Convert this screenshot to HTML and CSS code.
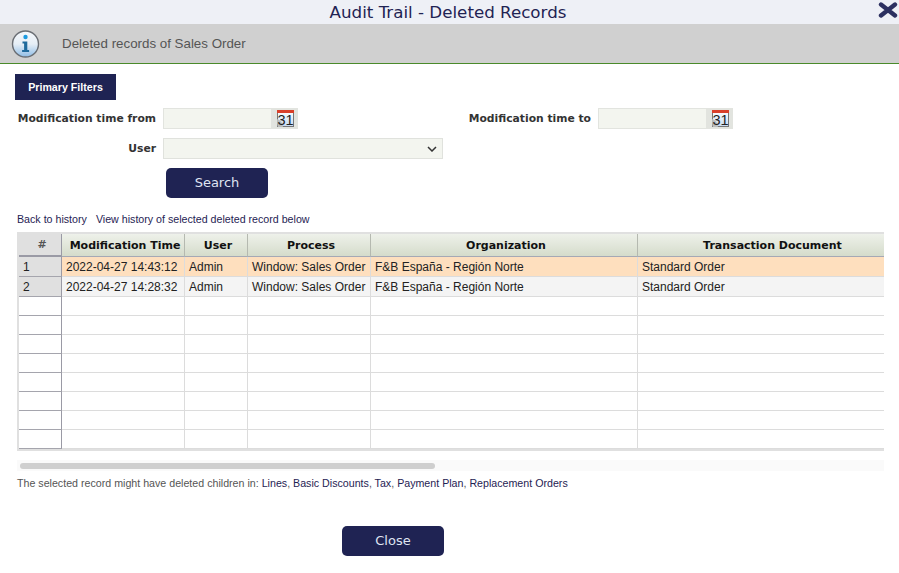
FILE: index.html
```html
<!DOCTYPE html>
<html lang="en">
<head>
    <meta charset="UTF-8">
    <title>Audit Trail - Deleted Records</title>
    <link rel="stylesheet" href="styles.css">
</head>
<body>
    <div class="title-bar">
        <span class="title-text">Audit Trail - Deleted Records</span>
        <svg class="close-icon" width="20" height="16" viewBox="0 0 20 16">
            <path d="M3 2.5 L17 13.5 M17 2.5 L3 13.5" stroke="#2c3060" stroke-width="4.4" stroke-linecap="round" fill="none"/>
        </svg>
    </div>

    <div class="message-bar">
        <svg class="info-icon" width="30" height="30" viewBox="0 0 30 30">
            <defs>
                <linearGradient id="infoFill" x1="0" y1="0" x2="0" y2="1">
                    <stop offset="0" stop-color="#f6f9fc"/>
                    <stop offset="0.5" stop-color="#e6eef6"/>
                    <stop offset="1" stop-color="#8fbde6"/>
                </linearGradient>
            </defs>
            <circle cx="14.5" cy="15" r="13" fill="url(#infoFill)" stroke="#6a6e74" stroke-width="1.4"/>
            <circle cx="14.5" cy="8" r="2.2" fill="#1d9be0"/>
            <path d="M11.5 12.5 H16.3 V21 H18.1 V23 H11.1 V21 H13.1 V14.5 H11.5 Z" fill="#1f6a9c"/>
        </svg>
        <span>Deleted records of Sales Order</span>
    </div>

    <div class="content">
        <div class="tab-row"><span class="tab">Primary Filters</span></div>

        <div class="filter-row">
            <label class="filter-label">Modification time from</label>
            <input class="filter-input" type="text">
            <span class="cal-btn">
                <svg width="17" height="17" viewBox="0 0 17 17">
                    <defs>
                        <linearGradient id="calFill" x1="0" y1="0" x2="0" y2="1">
                            <stop offset="0" stop-color="#ffffff"/>
                            <stop offset="1" stop-color="#c5daf2"/>
                        </linearGradient>
                    </defs>
                    <rect x="0.5" y="1" width="16" height="15.5" fill="url(#calFill)" stroke="#777"/>
                    <rect x="0" y="0" width="17" height="3" fill="#d9402a"/>
                    <path d="M0 9 Q5 10 6 17 H1 Q0 15 0 9 Z" fill="#b9bcbc"/>
                    <text x="8.5" y="15" class="cal-num">31</text>
                </svg>
            </span>
            <label class="filter-label filter-label-to">Modification time to</label>
            <input class="filter-input" type="text">
            <span class="cal-btn">
                <svg width="17" height="17" viewBox="0 0 17 17">
                    <rect x="0.5" y="1" width="16" height="15.5" fill="url(#calFill)" stroke="#777"/>
                    <rect x="0" y="0" width="17" height="3" fill="#d9402a"/>
                    <path d="M0 9 Q5 10 6 17 H1 Q0 15 0 9 Z" fill="#b9bcbc"/>
                    <text x="8.5" y="15" class="cal-num">31</text>
                </svg>
            </span>
        </div>

        <div class="filter-row user-row">
            <label class="filter-label">User</label>
            <div class="user-select">
                <svg width="10" height="6" viewBox="0 0 10 6">
                    <path d="M1 1 L5 5 L9 1" stroke="#333" stroke-width="1.5" fill="none"/>
                </svg>
            </div>
        </div>

        <button class="btn search-btn" type="button">Search</button>

        <div class="links">
            <a href="#">Back to history</a>
            <a href="#">View history of selected deleted record below</a>
        </div>

        <div class="grid-wrap">
            <table class="grid">
                <colgroup>
                    <col class="col-num">
                    <col class="col-time">
                    <col class="col-user">
                    <col class="col-process">
                    <col class="col-org">
                    <col class="col-doc">
                </colgroup>
                <thead>
                    <tr>
                        <th class="num">#</th>
                        <th>Modification Time</th>
                        <th>User</th>
                        <th>Process</th>
                        <th>Organization</th>
                        <th>Transaction Document</th>
                    </tr>
                </thead>
                <tbody>
                    <tr class="selected">
                        <td class="num">1</td>
                        <td>2022-04-27 14:43:12</td>
                        <td>Admin</td>
                        <td>Window: Sales Order</td>
                        <td>F&amp;B España - Región Norte</td>
                        <td>Standard Order</td>
                    </tr>
                    <tr class="filled">
                        <td class="num">2</td>
                        <td>2022-04-27 14:28:32</td>
                        <td>Admin</td>
                        <td>Window: Sales Order</td>
                        <td>F&amp;B España - Región Norte</td>
                        <td>Standard Order</td>
                    </tr>
                    <tr><td class="num"></td><td></td><td></td><td></td><td></td><td></td></tr>
                    <tr><td class="num"></td><td></td><td></td><td></td><td></td><td></td></tr>
                    <tr><td class="num"></td><td></td><td></td><td></td><td></td><td></td></tr>
                    <tr><td class="num"></td><td></td><td></td><td></td><td></td><td></td></tr>
                    <tr><td class="num"></td><td></td><td></td><td></td><td></td><td></td></tr>
                    <tr><td class="num"></td><td></td><td></td><td></td><td></td><td></td></tr>
                    <tr><td class="num"></td><td></td><td></td><td></td><td></td><td></td></tr>
                    <tr><td class="num"></td><td></td><td></td><td></td><td></td><td></td></tr>
                </tbody>
            </table>
        </div>

        <div class="scroll-track"><div class="scroll-thumb"></div></div>

        <p class="children-note">The selected record might have deleted children in:
            <a href="#">Lines</a>, <a href="#">Basic Discounts</a>, <a href="#">Tax</a>, <a href="#">Payment Plan</a>, <a href="#">Replacement Orders</a></p>

        <div class="footer">
            <button class="btn" type="button">Close</button>
        </div>
    </div>
</body>
</html>
```

FILE: styles.css
```css
body {
    margin: 0;
    height: 573px;
    overflow: hidden;
    background-color: #fff;
    font-family: "Liberation Sans", Arial, sans-serif;
    color: #333;
}

a {
    color: #1f2353;
    text-decoration: none;
}

/* title */
.title-bar {
    display: flex;
    justify-content: center;
    align-items: center;
    position: relative;
    height: 24px;
    padding-right: 3px;
    background-color: #eef0f6;
}

.title-text {
    font-family: "DejaVu Sans", sans-serif;
    font-size: 16.7px;
    color: #1f2353;
}

.close-icon {
    position: absolute;
    right: 1px;
    top: 2px;
}

/* message */
.message-bar {
    display: flex;
    align-items: center;
    gap: 21px;
    height: 39px;
    padding-left: 11px;
    background-color: #d0d0d0;
    border-bottom: 1px solid #4a8a2a;
    font-size: 13.33px;
    color: #555;
}

.info-icon {
    flex: none;
}

.content {
    padding: 10px 15px 0 15px;
}

.tab-row {
    display: flex;
    height: 26px;
}

.tab {
    display: flex;
    align-items: center;
    justify-content: center;
    width: 101px;
    background-color: #1f2353;
    color: #fff;
    font-size: 10.67px;
    font-weight: bold;
}

/* filters */
.filter-row {
    display: flex;
    align-items: center;
    height: 21px;
    margin-top: 8px;
}

.user-row {
    margin-top: 9px;
}

.filter-label {
    width: 141px;
    margin-right: 7px;
    text-align: right;
    font-family: "DejaVu Sans", sans-serif;
    font-size: 10.75px;
    font-weight: bold;
    color: #333;
    white-space: nowrap;
}

.filter-label-to {
    width: 130px;
    margin-left: 163px;
}

.filter-input {
    box-sizing: border-box;
    width: 109px;
    height: 21px;
    padding: 0;
    background-color: #f3f5ef;
    border: 1px solid #e2e4df;
    outline: none;
}

.cal-btn {
    display: flex;
    align-items: center;
    justify-content: center;
    width: 26px;
    height: 21px;
    background-color: #e2e4df;
}

.cal-num {
    font-family: "Liberation Sans", sans-serif;
    font-size: 14.5px;
    fill: #222;
    text-anchor: middle;
}

.user-select {
    box-sizing: border-box;
    display: flex;
    align-items: center;
    justify-content: flex-end;
    width: 280px;
    height: 21px;
    padding-right: 5px;
    background-color: #f3f5ef;
    border: 1px solid #e0e2dd;
}

/* buttons */
.btn {
    width: 102px;
    height: 30px;
    padding: 0 0 2px 0;
    border: none;
    border-radius: 5px;
    background-color: #1f2353;
    color: #dfe4f2;
    font-family: "DejaVu Sans", sans-serif;
    font-size: 13px;
    cursor: pointer;
}

.search-btn {
    display: block;
    margin: 9px 0 0 151px;
}

.links {
    display: flex;
    gap: 9px;
    margin: 14px 0 0 2px;
    font-size: 10.67px;
    line-height: 14px;
}

/* grid */
.grid-wrap {
    width: 867px;
    margin: 6px 0 0 2px;
    overflow: hidden;
}

.grid {
    table-layout: fixed;
    width: 886px;
    border-collapse: separate;
    border-spacing: 0;
    border-top: 2px solid #e0e0e0;
    border-left: 2px solid #e0e0e0;
    border-bottom: 2px solid #e0e0e0;
    font-size: 12px;
}

.col-num { width: 43px; }
.col-time { width: 123px; }
.col-user { width: 63px; }
.col-process { width: 123px; }
.col-org { width: 267px; }
.col-doc { width: 265px; }

.grid th {
    height: 21px;
    padding: 0 0 0 4px;
    background: linear-gradient(#eef1ea, #d5dccb);
    border-right: 1px solid #b5b9b0;
    border-bottom: 1px solid #a5a9b5;
    font-family: "DejaVu Sans", sans-serif;
    font-size: 11px;
    color: #111;
    text-align: center;
    white-space: nowrap;
}

.grid th:last-child,
.grid td:last-child {
    border-right: none;
}

.grid td {
    box-sizing: border-box;
    height: 19px;
    padding: 0 4px;
    background-color: #fff;
    border-right: 1px solid #dcdcdc;
    border-bottom: 1px solid #dcdcdc;
    color: #222;
    white-space: nowrap;
    overflow: hidden;
}

.grid th.num {
    background: #e0e0e0;
    color: #555;
    border-right: 1px solid #9a9aa5;
    border-bottom: 2px solid #9a9aa5;
}

.grid td.num {
    background-color: #fff;
    border-right: 1px solid #9a9aa5;
    border-bottom: 1px solid #a5a5ad;
}

.grid .selected td {
    height: 20px;
    background-color: #fedfbe;
}

.grid .filled td {
    height: 20px;
    background-color: #f4f4f4;
}

.grid .selected td.num,
.grid .filled td.num {
    background-color: #e0e0e0;
}

/* scrollbar */
.scroll-track {
    display: flex;
    align-items: center;
    width: 867px;
    height: 11px;
    margin: 9px 0 0 2px;
    background-color: #fafafa;
}

.scroll-thumb {
    width: 415px;
    height: 6px;
    margin-left: 3px;
    border-radius: 3px;
    background-color: #cfcfcf;
}

.children-note {
    margin: 5px 0 0 2px;
    font-size: 10.67px;
    line-height: 14px;
    color: #555;
}

.footer {
    display: flex;
    margin: 36px 0 0 327px;
}
```
